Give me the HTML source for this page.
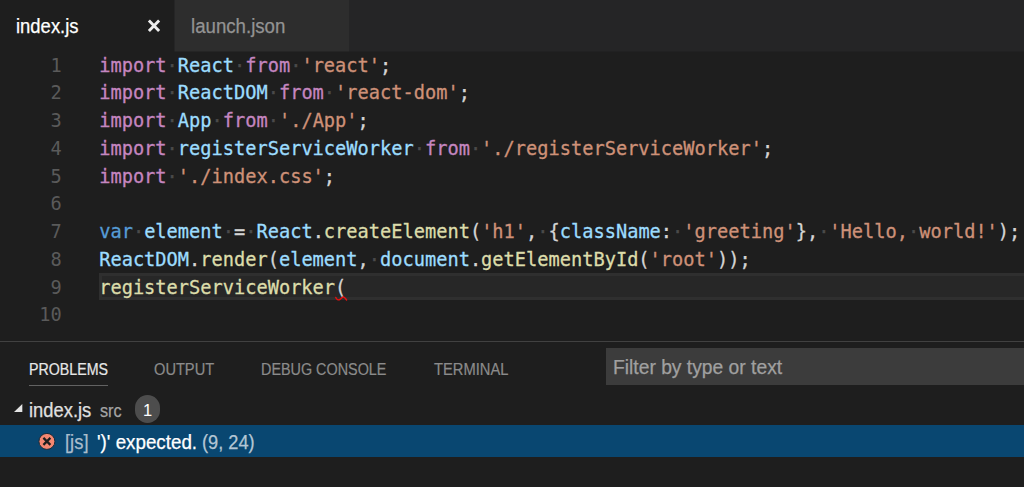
<!DOCTYPE html>
<html lang="en">
<head>
<meta charset="utf-8">
<title>index.js - Visual Studio Code</title>
<style>
html,body{margin:0;padding:0;}
body{width:1024px;height:487px;overflow:hidden;background:#1e1e1e;position:relative;font-family:"Liberation Sans","DejaVu Sans",sans-serif;color:#d4d4d4;}
.abs{position:absolute;white-space:pre;}
/* tabs */
#tabstrip{left:0;top:0;width:1024px;height:51px;background:#252526;}
#tab1{left:0;top:0;width:174px;height:51px;background:#1e1e1e;}
#tab2{left:175px;top:0;width:174px;height:51px;background:#2d2d2d;}
.tablabel{font-size:19.4px;line-height:22px;top:15.1px;transform-origin:0 0;-webkit-text-stroke:0.25px;}
/* editor */
#editor{left:0;top:51px;width:1024px;height:290px;background:#1e1e1e;}
.ln{font-family:"DejaVu Sans Mono","Liberation Mono",monospace;font-size:18.65px;line-height:27.67px;height:27.67px;color:#5a5a5a;left:0;width:61.8px;text-align:right;}
.cl{font-family:"DejaVu Sans Mono","Liberation Mono",monospace;font-size:18.667px;line-height:27.67px;height:27.67px;left:99.2px;color:#d4d4d4;-webkit-text-stroke:0.3px;}
.k{color:#c586c0}.v{color:#9cdcfe}.s{color:#ce9178}.b{color:#569cd6}.f{color:#dcdcaa}
.cl i{font-style:normal;color:#4a4a4a;}
#curline{left:99px;top:273px;width:940px;height:21px;border:3px solid #2f2f2f;background:#272727;}
/* panel */
#panelborder{left:0;top:341px;width:1024px;height:1px;background:#414141;}
.pt{font-size:16.1px;line-height:20px;top:359.4px;color:#8b8b8b;transform-origin:0 0;-webkit-text-stroke:0.2px;}
#filter{left:606px;top:348px;width:418px;height:37px;background:#3c3c3c;}
.row{font-size:19.4px;line-height:22px;transform-origin:0 0;-webkit-text-stroke:0.25px;}
</style>
</head>
<body>
<div id="tabstrip" class="abs"></div>
<div id="tab1" class="abs"></div>
<div id="tab2" class="abs"></div>
<div id="t1" class="abs tablabel" style="left:15.64px;color:#ffffff;transform:scaleX(0.9516);">index.js</div>
<svg class="abs" style="left:147px;top:18.5px" width="14" height="14" viewBox="0 0 14 14"><path d="M1.9 1.5 L12.1 12.1 M12.1 1.5 L1.9 12.1" stroke="#ececec" stroke-width="2.9" fill="none"/></svg>
<div id="t2" class="abs tablabel" style="left:191.38px;color:#939393;transform:scaleX(0.9619);">launch.json</div>

<div id="editor" class="abs"></div>
<div class="abs" style="left:0;top:51px;width:1024px;height:1px;background:#212122;"></div>
<div class="abs" style="left:175px;top:51px;width:174px;height:1px;background:#252525;"></div>
<div class="abs" style="left:0;top:51px;width:174px;height:1px;background:#1e1e1e;"></div>
<div id="curline" class="abs"></div>
<div id="lines">
<div class="abs ln" style="top:52px">1</div>
<div class="abs ln" style="top:79px">2</div>
<div class="abs ln" style="top:107px">3</div>
<div class="abs ln" style="top:135px">4</div>
<div class="abs ln" style="top:163px">5</div>
<div class="abs ln" style="top:190px">6</div>
<div class="abs ln" style="top:218px">7</div>
<div class="abs ln" style="top:246px">8</div>
<div class="abs ln" style="top:274px">9</div>
<div class="abs ln" style="top:301px">10</div>
<div class="abs cl" style="top:52px"><span class="k">import</span><i>·</i><span class="v">React</span><i>·</i><span class="k">from</span><i>·</i><span class="s">'react'</span>;</div>
<div class="abs cl" style="top:79px"><span class="k">import</span><i>·</i><span class="v">ReactDOM</span><i>·</i><span class="k">from</span><i>·</i><span class="s">'react-dom'</span>;</div>
<div class="abs cl" style="top:107px"><span class="k">import</span><i>·</i><span class="v">App</span><i>·</i><span class="k">from</span><i>·</i><span class="s">'./App'</span>;</div>
<div class="abs cl" style="top:135px"><span class="k">import</span><i>·</i><span class="v">registerServiceWorker</span><i>·</i><span class="k">from</span><i>·</i><span class="s">'./registerServiceWorker'</span>;</div>
<div class="abs cl" style="top:163px"><span class="k">import</span><i>·</i><span class="s">'./index.css'</span>;</div>
<div class="abs cl" style="top:218px"><span class="b">var</span><i>·</i><span class="v">element</span><i>·</i>=<i>·</i><span class="v">React</span>.<span class="f">createElement</span>(<span class="s">'h1'</span>,<i>·</i>{<span class="v">className</span>:<i>·</i><span class="s">'greeting'</span>},<i>·</i><span class="s">'Hello,<i>·</i>world!'</span>);</div>
<div class="abs cl" style="top:246px"><span class="v">ReactDOM</span>.<span class="f">render</span>(<span class="v">element</span>,<i>·</i><span class="v">document</span>.<span class="f">getElementById</span>(<span class="s">'root'</span>));</div>
<div class="abs cl" style="top:274px"><span class="f">registerServiceWorker</span>(</div>
</div>
<svg class="abs" style="left:334px;top:294px" width="16" height="8" viewBox="0 0 16 8"><path d="M1.8 3.4 C2.6 5.6 4.4 6.4 6 5.4 C7.6 4.4 8.2 3 9.4 3 C10.6 3 11.4 4.4 12.6 6" stroke="#e81010" stroke-width="1.4" fill="none" stroke-linecap="round"/></svg>

<div id="panelborder" class="abs"></div>
<div id="p1" class="abs pt" style="left:28.99px;color:#e7e7e7;transform:scaleX(0.8835);">PROBLEMS</div>
<div class="abs" style="left:29px;top:385px;width:79px;height:1px;background:#626262;"></div>
<div id="p2" class="abs pt" style="left:154.44px;transform:scaleX(0.9088);">OUTPUT</div>
<div id="p3" class="abs pt" style="left:261.4px;transform:scaleX(0.8933);">DEBUG CONSOLE</div>
<div id="p4" class="abs pt" style="left:433.57px;transform:scaleX(0.9152);">TERMINAL</div>
<div id="filter" class="abs"></div>
<div id="flt" class="abs row" style="left:612.7px;top:355.6px;color:#a0a0a0;transform:scaleX(0.9932);">Filter by type or text</div>

<svg class="abs" style="left:13px;top:403px" width="10" height="10" viewBox="0 0 10 10"><path d="M9.3 1 V9.1 H1 Z" fill="#e4e4e4"/></svg>
<div id="r1" class="abs row" style="left:29.01px;top:398.6px;color:#e0e0e0;transform:scaleX(0.9469);">index.js</div>
<div id="src" class="abs row" style="left:99.54px;top:399.6px;color:#a5a5a5;font-size:17.5px;transform:scaleX(0.9244);">src</div>
<div class="abs" style="left:135px;top:395px;width:25px;height:27.5px;border-radius:13px;background:#4d4d4d;"></div>
<div class="abs" style="left:135px;top:399.6px;width:25px;text-align:center;font-size:16.5px;line-height:20px;color:#ffffff;">1</div>

<div class="abs" style="left:0;top:425px;width:1024px;height:32px;background:#094771;"></div>
<svg class="abs" style="left:38px;top:433px" width="18" height="18" viewBox="0 0 18 18"><circle cx="8.9" cy="8.4" r="8" fill="#f48771" stroke="#1b2a38" stroke-width="1"/><path d="M5.4 4.9 L12.4 11.9 M12.4 4.9 L5.4 11.9" stroke="#1e1e1e" stroke-width="2.2" fill="none"/></svg>
<div id="js" class="abs row" style="left:64.69px;top:430.8px;color:#a9bdcc;transform:scaleX(0.9483);">[js]</div>
<div id="msg" class="abs row" style="left:96.77px;top:430.8px;color:#ffffff;transform:scaleX(0.9683);">')' expected.</div>
<div id="pos" class="abs row" style="left:202.45px;top:430.8px;color:#b4c6d4;transform:scaleX(0.9395);">(9, 24)</div>
</body>
</html>
